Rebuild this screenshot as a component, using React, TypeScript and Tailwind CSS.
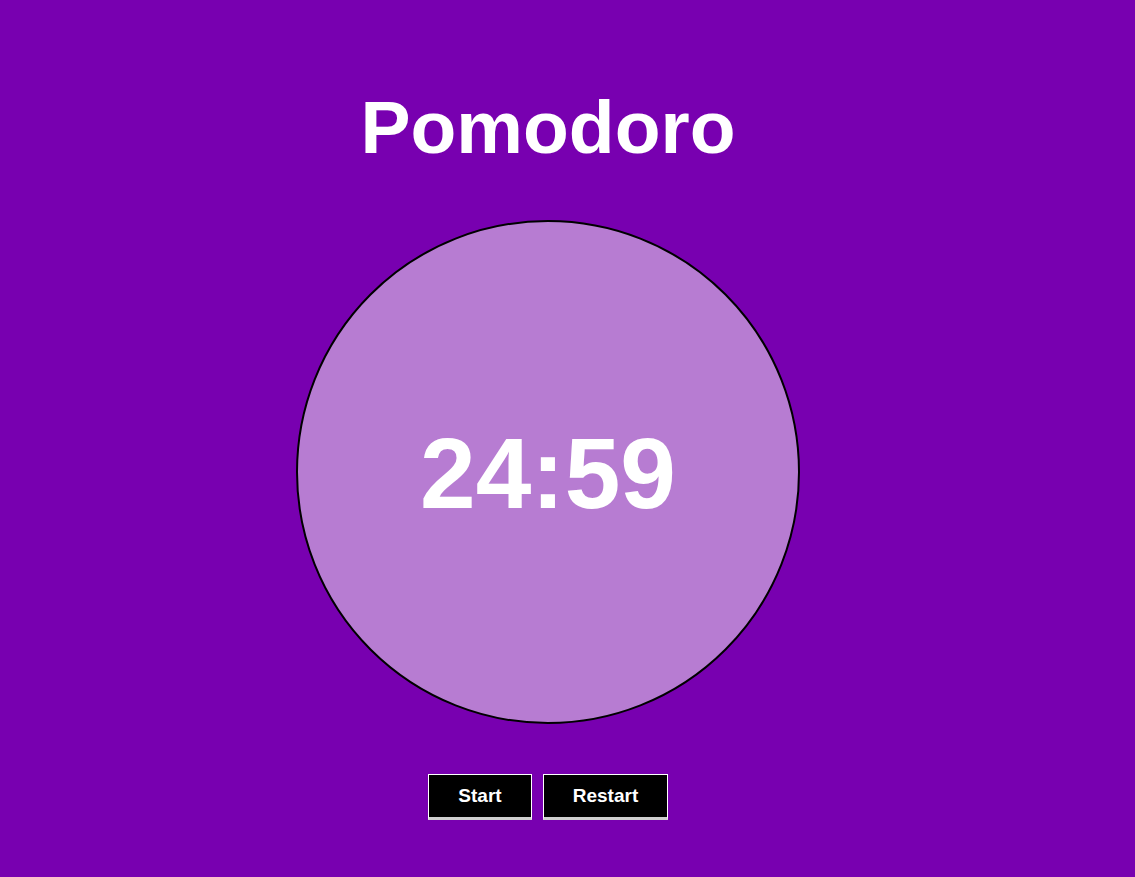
import React from "react";

export default function App() {
  return (
    <main
      className="min-h-[877px] w-full bg-[#7800b0] flex flex-col items-center pr-[39px]"
      style={{ fontFamily: '"Liberation Sans", Arial, sans-serif' }}
    >
      <h1 className="mt-[83px] h-[88px] leading-[88px] text-[75px] font-bold text-white">Pomodoro</h1>
      <div className="mt-[49px] w-[504px] h-[504px] rounded-full bg-[#b77cd2] border-2 border-black flex items-center justify-center">
        <span className="text-[100px] font-bold text-white leading-none mt-[2px]">24:59</span>
      </div>
      <div className="mt-[50px] flex gap-[11px]">
        <button className="h-[46px] w-[104px] bg-black text-white text-[19px] font-bold border border-white border-b-[3px] border-b-[#cfcfcf]">
          Start
        </button>
        <button className="h-[46px] w-[125px] bg-black text-white text-[19px] font-bold border border-white border-b-[3px] border-b-[#cfcfcf]">
          Restart
        </button>
      </div>
    </main>
  );
}
